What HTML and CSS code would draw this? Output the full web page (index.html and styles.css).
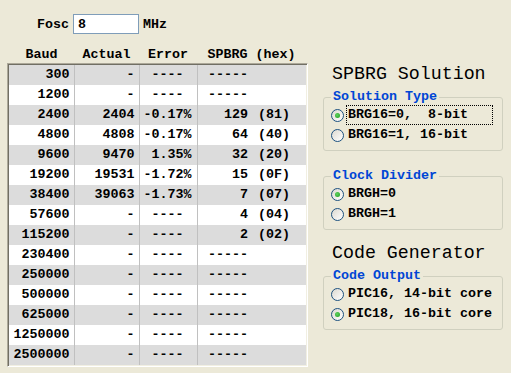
FILE: index.html
```html
<!DOCTYPE html>
<html>
<head>
<meta name="viewport" content="width=device-width, initial-scale=1">
<title>SPBRG Calculator</title>
<link rel="stylesheet" href="styles.css">
</head>
<body>
<div class="app">
  <div class="left">
    <div class="fosc">
      <span class="fosc-label">Fosc</span>
      <input class="fosc-input" type="text" value="8">
      <span class="fosc-unit">MHz</span>
    </div>

    <div class="colhead">
      <span>Baud</span>
      <span>Actual</span>
      <span>Error</span>
      <span>SPBRG (hex)</span>
    </div>

    <div class="frame">
      <table id="rates"></table>
    </div>
  </div>

  <div class="right">
    <h2 class="title">SPBRG Solution</h2>
    <fieldset class="group">
      <legend>Solution Type</legend>
      <div class="opt"><span class="radio on"></span><span class="lbl focus">BRG16=0,  8-bit</span></div>
      <div class="opt"><span class="radio"></span><span class="lbl">BRG16=1, 16-bit</span></div>
    </fieldset>

    <fieldset class="group second">
      <legend>Clock Divider</legend>
      <div class="opt"><span class="radio on"></span><span class="lbl">BRGH=0</span></div>
      <div class="opt"><span class="radio"></span><span class="lbl">BRGH=1</span></div>
    </fieldset>

    <h2 class="title title2">Code Generator</h2>
    <fieldset class="group">
      <legend>Code Output</legend>
      <div class="opt"><span class="radio"></span><span class="lbl">PIC16, 14-bit core</span></div>
      <div class="opt"><span class="radio on"></span><span class="lbl">PIC18, 16-bit core</span></div>
    </fieldset>
  </div>
</div>
<script>
var rows = [
  ["300","-","---- ","-----",""],
  ["1200","-","---- ","-----",""],
  ["2400","2404","-0.17%","129","(81)"],
  ["4800","4808","-0.17%","64","(40)"],
  ["9600","9470","1.35%","32","(20)"],
  ["19200","19531","-1.72%","15","(0F)"],
  ["38400","39063","-1.73%","7","(07)"],
  ["57600","-","---- ","4","(04)"],
  ["115200","-","---- ","2","(02)"],
  ["230400","-","---- ","-----",""],
  ["250000","-","---- ","-----",""],
  ["500000","-","---- ","-----",""],
  ["625000","-","---- ","-----",""],
  ["1250000","-","---- ","-----",""],
  ["2500000","-","---- ","-----",""]
];

var table = "<colgroup><col class='c1'><col class='c2'><col class='c3'><col class='c4'><col class='c5'></colgroup><tbody>";
for (var i = 0; i < rows.length; i++) {
  table += "<tr>";
  for (var j = 0; j < 5; j++) {
    table += "<td>" + rows[i][j] + "</td>";
  }
  table += "</tr>";
}
table += "</tbody>";
document.getElementById("rates").innerHTML = table;
</script>
</body>
</html>
```

FILE: styles.css
```css
body {
  margin: 0;
  background-color: #ece9d8;
  font-family: "Liberation Mono", "Courier New", monospace;
  font-size: 13.33px;
  font-weight: bold;
  color: #000;
}

.app {
  display: flex;
  width: 511px;
  height: 373px;
}

.left {
  width: 316px;
  padding-left: 7px;
}

/* oscillator input */
.fosc {
  display: flex;
  align-items: center;
  margin-top: 14px;
  margin-left: 30px;
  height: 20px;
}

.fosc-input {
  box-sizing: border-box;
  width: 66px;
  height: 20px;
  margin: 0 4px;
  padding: 0 4px;
  border: 1px solid #7f9db9;
  background: #fff;
  font-family: inherit;
  font-size: 13.33px;
  font-weight: bold;
}

/* column titles */
.colhead {
  display: grid;
  grid-template-columns: 65px 65px 58px 109px;
  margin-top: 13px;
  margin-left: 2px;
  height: 16px;
  line-height: 16px;
  text-align: center;
}

/* sunken list frame */
.frame {
  width: 297px;
  padding: 1px;
  border: 1px solid;
  border-color: #aca899 #fff #fff #aca899;
  box-shadow: inset 1px 1px #716f64, inset -1px -1px #f1efe2;
}

#rates {
  border-collapse: collapse;
  table-layout: fixed;
  width: 297px;
}

#rates col.c1 { width: 65px; }
#rates col.c2 { width: 65px; }
#rates col.c3 { width: 58px; }
#rates col.c4 { width: 54px; }
#rates col.c5 { width: 55px; }

#rates td {
  height: 20px;
  padding: 0;
  text-align: right;
  white-space: pre;
  line-height: 20px;
}

#rates td:nth-child(1) { padding-right: 4px; border-right: 1px solid #c0c0c0; }
#rates td:nth-child(2) { padding-right: 4px; border-right: 1px solid #c0c0c0; }
#rates td:nth-child(3) { padding-right: 5px; border-right: 1px solid #c0c0c0; }
#rates td:nth-child(4) { padding-right: 3px; }
#rates td:nth-child(5) { padding-left: 7px; text-align: left; }

#rates tr:nth-child(odd) { background-color: #dcdcdc; }
#rates tr:nth-child(even) { background-color: #fff; }

/* right side */
.right {
  width: 180px;
}

.title {
  margin: 64px 0 6px 9px;
  height: 20px;
  font-size: 18.3px;
  font-weight: normal;
  line-height: 20px;
}

.title2 {
  margin-top: 13px;
}

.group {
  margin: 0;
  padding: 1px 6px 5px 7px;
  border: 1px solid #d0d0bf;
  border-radius: 3px;
}

.group.second {
  margin-top: 18px;
}

.group legend {
  padding: 0 2px;
  color: #0046d5;
  line-height: 14px;
}

.opt {
  display: flex;
  align-items: center;
  height: 20px;
}

.radio {
  box-sizing: border-box;
  width: 13px;
  height: 13px;
  border: 1px solid #1c5180;
  border-radius: 50%;
  background: linear-gradient(135deg, #dcd9d0, #fff);
  display: flex;
  align-items: center;
  justify-content: center;
}

.radio.on::after {
  content: "";
  width: 5px;
  height: 5px;
  border-radius: 50%;
  background: radial-gradient(circle at 40% 40%, #5fd35f, #1f9a1f);
}

.lbl {
  margin-left: 3px;
  padding: 1px 1px;
  white-space: pre;
  line-height: 16px;
}

.lbl.focus {
  width: 143px;
  outline: 1px dotted #000;
}
```
